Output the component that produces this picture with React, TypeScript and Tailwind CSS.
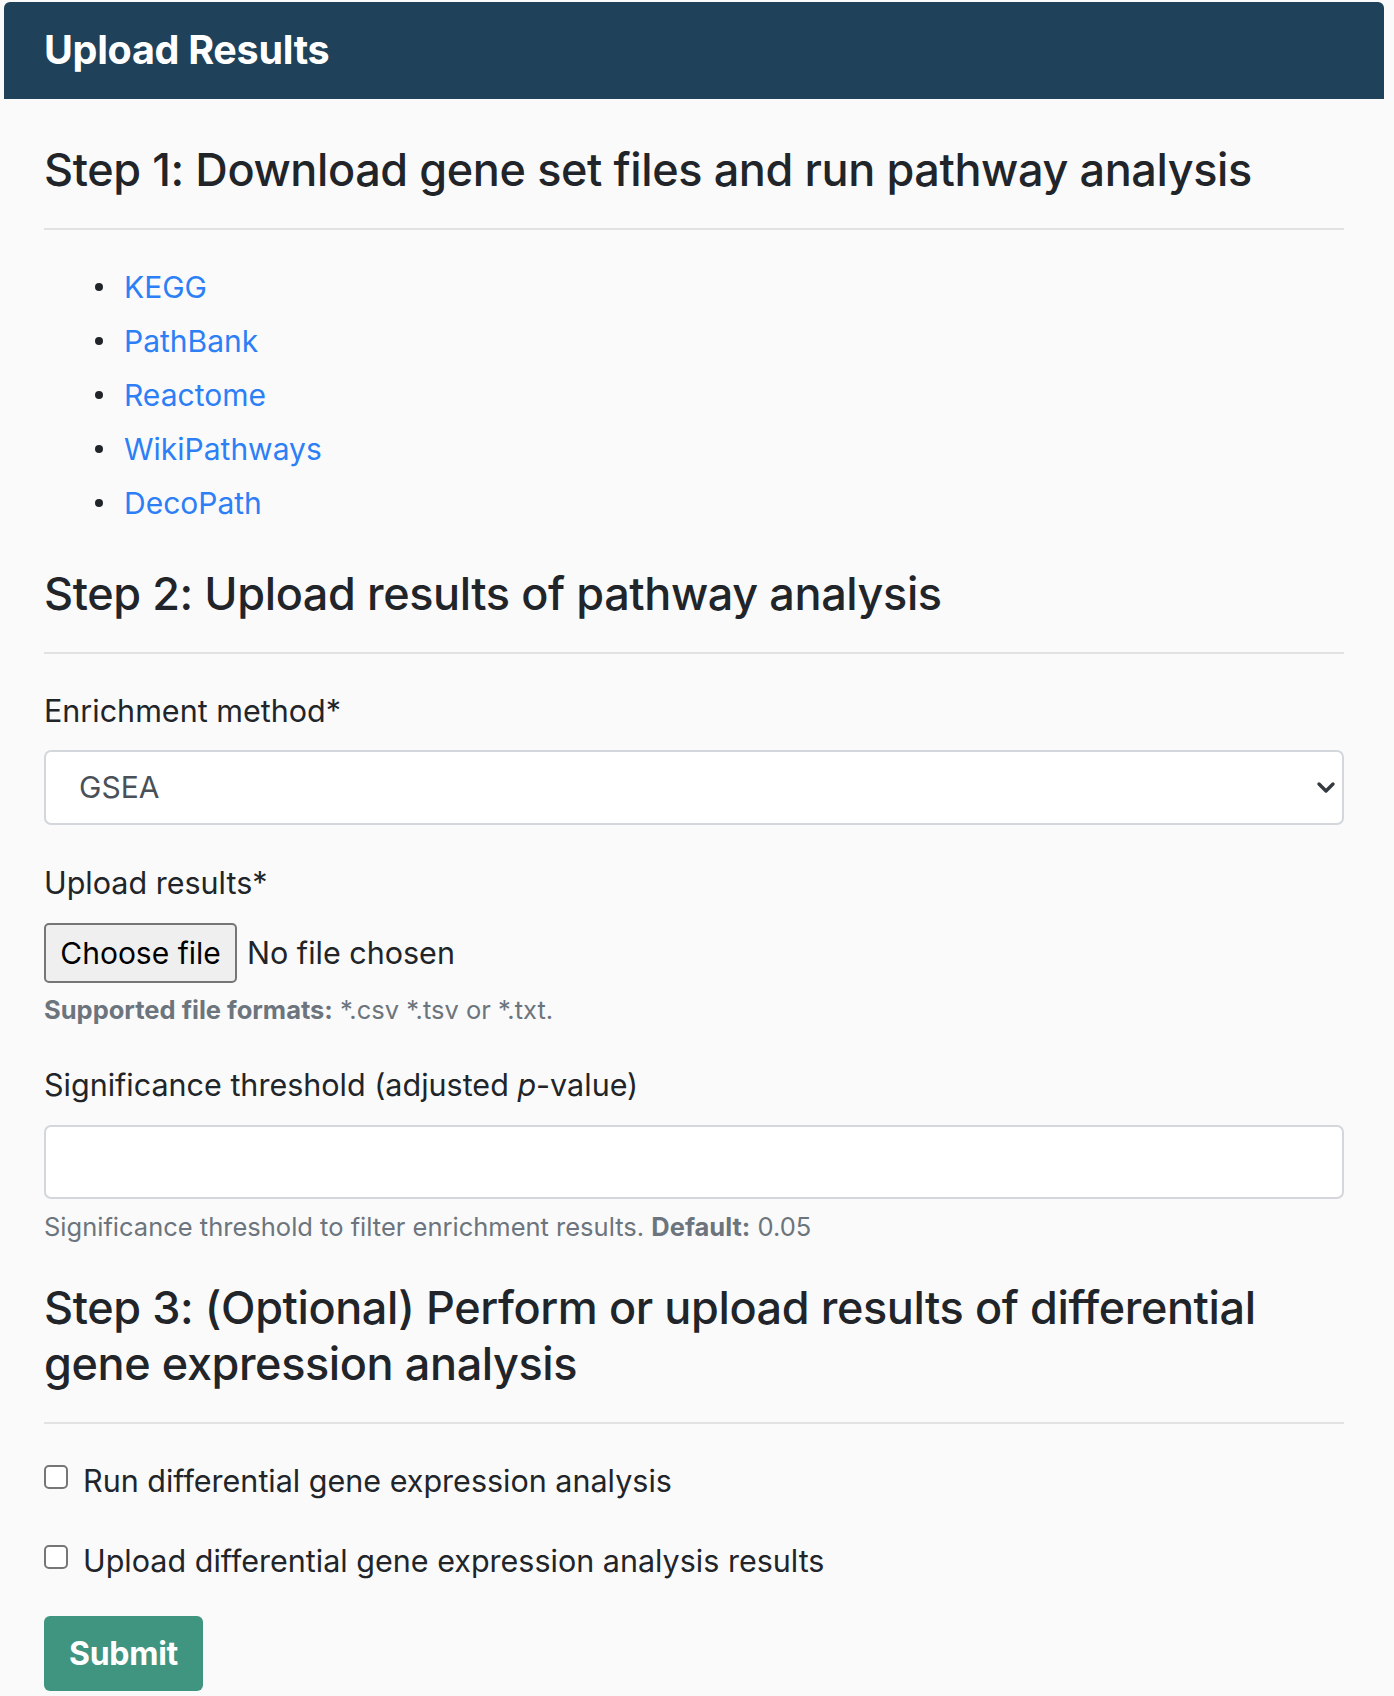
import React from 'react';

const links = ['KEGG', 'PathBank', 'Reactome', 'WikiPathways', 'DecoPath'];

function StepHeading({ children, className = '' }: { children: React.ReactNode; className?: string }) {
  return (
    <>
      <h2 className={`text-[45px] leading-[56px] font-medium text-[#212529] tracking-[-0.4px] ${className}`}>{children}</h2>
      <hr className="mt-[30px] border-0 border-t-2 border-[#e2e2e2]" />
    </>
  );
}

function Checkbox({ label, className = '' }: { label: string; className?: string }) {
  return (
    <label className={`flex items-center h-[42px] ${className}`}>
      <span className="w-[24px] h-[24px] -mt-[8px] rounded-[5px] border-2 border-[#767676] bg-white shrink-0" />
      <span className="ml-[15px] text-[30.5px] text-[#212529]">{label}</span>
    </label>
  );
}

export default function App() {
  return (
    <div className="min-h-screen bg-[#fafafa] pt-[2px] pl-[4px]" style={{ fontFamily: 'Inter, "Noto Sans", sans-serif' }}>
      <div className="w-[1380px]">
        {/* Header */}
        <div className="h-[97px] bg-[#1f4159] rounded-t-[6px] flex items-center px-[40px]">
          <h1 className="text-[39.5px] font-bold text-white tracking-[-0.3px]">Upload Results</h1>
        </div>

        {/* Body */}
        <div className="px-[40px] pb-[6px]">
          <StepHeading className="mt-[43px]">Step 1: Download gene set files and run pathway analysis</StepHeading>

          <ul className="mt-[30px]">
            {links.map((l) => (
              <li key={l} className="h-[54px] flex items-center text-[30px]">
                <span className="ml-[51px] w-[8px] h-[8px] rounded-full bg-[#212529]" />
                <a href="#" className="ml-[21px] text-[#2d7ff6]">{l}</a>
              </li>
            ))}
          </ul>

          <StepHeading className="mt-[36px]">Step 2: Upload results of pathway analysis</StepHeading>

          {/* Enrichment method */}
          <div className="mt-[36px] text-[30.5px] leading-[42px] text-[#212529]">Enrichment method*</div>
          <div className="mt-[18px] h-[75px] bg-white border-2 border-[#d3d7db] rounded-[7px] flex items-center justify-between pl-[33px] pr-[6px]">
            <span className="text-[30px] text-[#495057]">GSEA</span>
            <svg width="20" height="14" viewBox="0 0 20 14">
              <polyline points="3,3 10,10 17,3" fill="none" stroke="#343a40" strokeWidth="3.4" strokeLinecap="round" strokeLinejoin="round" />
            </svg>
          </div>

          {/* Upload results */}
          <div className="mt-[37px] text-[30.5px] leading-[42px] text-[#212529]">Upload results*</div>
          <div className="mt-[19px] flex items-center">
            <button className="h-[60px] w-[193px] bg-[#efefef] border-2 border-[#767676] rounded-[5px] text-[30px] text-black">Choose file</button>
            <span className="ml-[10px] text-[30.5px] text-[#212529]">No file chosen</span>
          </div>
          <div className="mt-[9px] text-[25.5px] leading-[36px] text-[#6c757d]">
            <span className="font-bold">Supported file formats:</span> *.csv *.tsv or *.txt.
          </div>

          {/* Significance */}
          <div className="mt-[36px] text-[30.5px] leading-[42px] text-[#212529]">
            Significance threshold (adjusted <i>p</i>-value)
          </div>
          <div className="mt-[19px] h-[74px] bg-white border-2 border-[#d3d7db] rounded-[7px]" />
          <div className="mt-[10px] text-[25.5px] leading-[36px] text-[#6c757d]">
            Significance threshold to filter enrichment results. <span className="font-bold">Default:</span> 0.05
          </div>

          <StepHeading className="mt-[35px]">
            Step 3: (Optional) Perform or upload results of differential gene expression analysis
          </StepHeading>

          <Checkbox label="Run differential gene expression analysis" className="mt-[36px]" />
          <Checkbox label="Upload differential gene expression analysis results" className="mt-[38px]" />

          <button className="mt-[34px] h-[75px] w-[159px] bg-[#409580] rounded-[6px] text-white text-[32px] font-bold tracking-[-0.3px]">
            Submit
          </button>
        </div>
      </div>
    </div>
  );
}
